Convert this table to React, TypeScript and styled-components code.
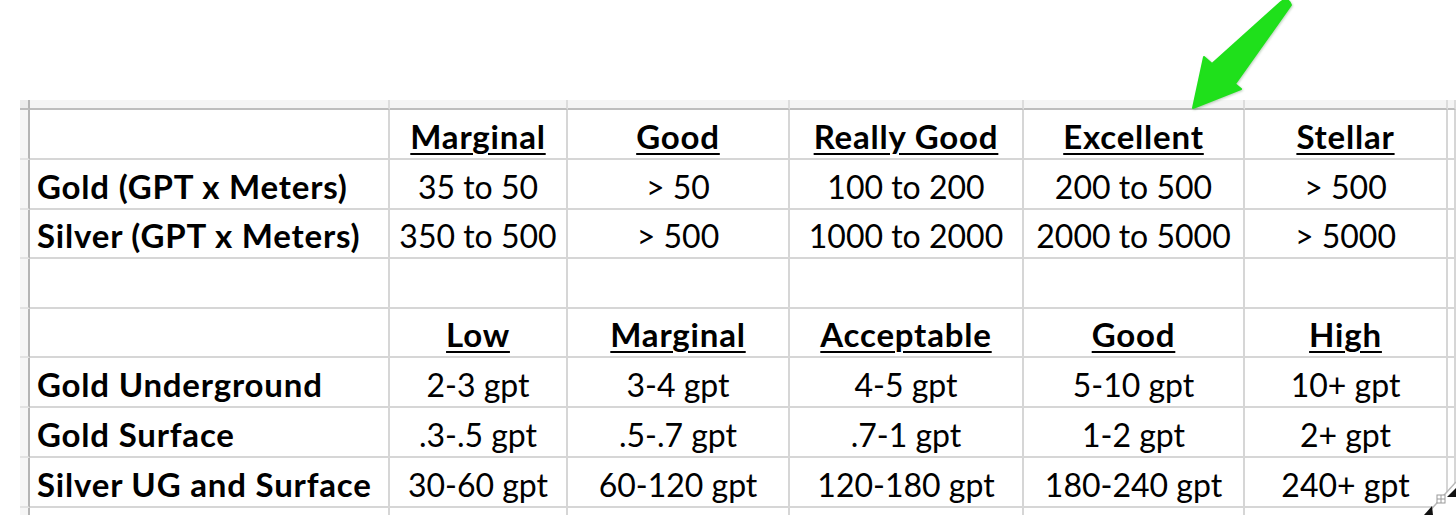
import React from "react";
import styled, { createGlobalStyle } from "styled-components";

const GlobalStyle = createGlobalStyle`
  html, body {
    margin: 0;
    padding: 0;
    background: #ffffff;
  }
  body {
    font-family: "Lato", "Open Sans", sans-serif;
    color: #000;
    overflow: hidden;
  }
`;

const COLS = [10, 360, 178, 222, 234, 221, 203];
const ROWS = [50, 50, 49, 50, 49, 50, 50, 50, 50];

type Row = {
  label?: string;
  values: string[];
  header?: boolean;
};

const rows: Row[] = [
  {
    values: ["Marginal", "Good", "Really Good", "Excellent", "Stellar"],
    header: true,
  },
  {
    label: "Gold (GPT x Meters)",
    values: ["35 to 50", "> 50", "100 to 200", "200 to 500", "> 500"],
  },
  {
    label: "Silver (GPT x Meters)",
    values: ["350 to 500", "> 500", "1000 to 2000", "2000 to 5000", "> 5000"],
  },
  { values: ["", "", "", "", ""] },
  {
    values: ["Low", "Marginal", "Acceptable", "Good", "High"],
    header: true,
  },
  {
    label: "Gold Underground",
    values: ["2-3 gpt", "3-4 gpt", "4-5 gpt", "5-10 gpt", "10+ gpt"],
  },
  {
    label: "Gold Surface",
    values: [".3-.5 gpt", ".5-.7 gpt", ".7-1 gpt", "1-2 gpt", "2+ gpt"],
  },
  {
    label: "Silver UG and Surface",
    values: ["30-60 gpt", "60-120 gpt", "120-180 gpt", "180-240 gpt", "240+ gpt"],
  },
  { values: ["", "", "", "", ""] },
];

const Page = styled.div`
  position: relative;
  width: 1456px;
  height: 515px;
  overflow: hidden;
  display: flex;
  flex-direction: column;
`;

const TopSpace = styled.div`
  height: 100px;
  flex: none;
`;

const Sheet = styled.div`
  display: grid;
  grid-template-columns: ${COLS.map((c) => `${c}px`).join(" ")} 1fr;
  padding-left: 20px;
`;

const ColHead = styled.div<{ $corner?: boolean }>`
  height: 10px;
  box-sizing: border-box;
  background: ${(p) => (p.$corner ? "#ececec" : "#f4f4f4")};
  border-bottom: 2px solid #bdbdbd;
  border-right: 2px solid ${(p) => (p.$corner ? "#b5b5b5" : "#dcdcdc")};
`;

const RowHead = styled.div<{ $h: number }>`
  height: ${(p) => p.$h}px;
  box-sizing: border-box;
  background: #f6f6f6;
  border-right: 2px solid #b5b5b5;
  border-bottom: 2px solid #e2e2e2;
`;

const Cell = styled.div<{ $h: number; $label?: boolean; $bold?: boolean }>`
  height: ${(p) => p.$h}px;
  box-sizing: border-box;
  border-right: 2px solid #d6d6d6;
  border-bottom: 2px solid #d6d6d6;
  display: flex;
  align-items: flex-end;
  justify-content: ${(p) => (p.$label ? "flex-start" : "center")};
  padding: 0 0 ${(p) => (p.$bold ? 6 : 5)}px ${(p) => (p.$label ? "7px" : "0")};
  font-size: ${(p) => (p.$bold ? 33 : 32)}px;
  line-height: 32px;
  letter-spacing: ${(p) => (p.$bold ? "0.8px" : "0")};
  font-weight: ${(p) => (p.$bold ? 700 : 400)};
  white-space: nowrap;
  overflow: visible;
`;

const Underlined = styled.span`
  text-decoration: underline;
  text-decoration-thickness: 2px;
  text-underline-offset: 4px;
`;

const Arrow = styled.svg`
  position: absolute;
  left: 1150px;
  top: 0;
  filter: drop-shadow(1px 1px 1px rgba(0, 80, 0, 0.25));
`;

const CornerBadge = styled.svg`
  position: absolute;
  right: 0;
  bottom: 0;
`;

export default function App() {
  return (
    <>
      <GlobalStyle />
      <Page>
        <TopSpace />
        <Sheet>
          <ColHead $corner />
          {COLS.slice(1).map((_, i) => (
            <ColHead key={i} />
          ))}
          <ColHead />
          {rows.map((row, r) => (
            <React.Fragment key={r}>
              <RowHead $h={ROWS[r]} />
              <Cell $h={ROWS[r]} $label $bold>
                {row.label}
              </Cell>
              {row.values.map((v, i) => (
                <Cell key={i} $h={ROWS[r]} $bold={row.header}>
                  {row.header ? <Underlined>{v}</Underlined> : v}
                </Cell>
              ))}
              <Cell $h={ROWS[r]} />
            </React.Fragment>
          ))}
        </Sheet>

        <Arrow width="160" height="115" viewBox="0 0 160 115">
          <path
            d="M43 108 L54 57 L62 64 L131 2 Q138 -3 141 5 L85 84 L91 89 Z"
            fill="#1fe01b"
            stroke="#1fe01b"
            strokeWidth="2"
            strokeLinejoin="round"
          />
        </Arrow>

        <CornerBadge width="42" height="45" viewBox="0 0 42 45">
          <path d="M12 45 L42 12 L42 45 Z" fill="#ffffff" />
          <path d="M12 45 L42 12" stroke="#b8b8b8" strokeWidth="1.5" />
          <path d="M33 27 L42 18 L42 27 Z" fill="#111" />
          <path d="M10 45 L18 36 L19 45 Z" fill="#111" />
          <rect x="23" y="25" width="8" height="8" fill="#fff" stroke="#9a9a9a" strokeWidth="1" />
          <path d="M27 25 V33 M23 29 H31" stroke="#9a9a9a" strokeWidth="1" />
        </CornerBadge>
      </Page>
    </>
  );
}
